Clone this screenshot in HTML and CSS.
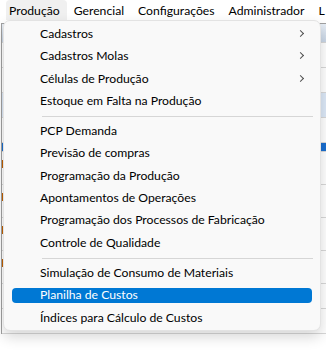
FILE: index.html
```html
<!DOCTYPE html>
<html lang="pt-BR">
<head>
    <meta charset="UTF-8">
    <title>Produção</title>
    <link rel="stylesheet" href="styles.css">
</head>
<body>
    <nav class="menubar">
        <span class="top-item active">Produção</span>
        <span class="top-item">Gerencial</span>
        <span class="top-item">Configurações</span>
        <span class="top-item">Administrador</span>
        <span class="top-item">L</span>
    </nav>

    <div class="app">
        <div class="grid-row head"></div>
        <div class="grid-row"></div>
        <div class="grid-row"></div>
        <div class="grid-row light"></div>
        <div class="grid-row"></div>
        <div class="grid-row sel"></div>
        <div class="grid-row"><span class="mark"></span></div>
        <div class="grid-row"><span class="mark"></span></div>
        <div class="grid-row"><span class="mark"></span></div>
        <div class="grid-row"><span class="mark"></span></div>
        <div class="grid-row"></div>
        <div class="grid-row"></div>
    </div>

    <ul class="dropdown">
        <li class="item sub">Cadastros</li>
        <li class="item sub">Cadastros Molas</li>
        <li class="item sub">Células de Produção</li>
        <li class="item">Estoque em Falta na Produção</li>
        <li class="sep"></li>
        <li class="item">PCP Demanda</li>
        <li class="item">Previsão de compras</li>
        <li class="item">Programação da Produção</li>
        <li class="item">Apontamentos de Operações</li>
        <li class="item">Programação dos Processos de Fabricação</li>
        <li class="item">Controle de Qualidade</li>
        <li class="sep"></li>
        <li class="item">Simulação de Consumo de Materiais</li>
        <li class="item hover">Planilha de Custos</li>
        <li class="item">Índices para Cálculo de Custos</li>
    </ul>
</body>
</html>
```

FILE: styles.css
```css
body {
    margin: 0;
    font-family: Lato, "Noto Sans", sans-serif;
    font-size: 12.2px;
    color: #000;
    background: #fff;
    width: 326px;
    height: 352px;
    overflow: hidden;
    position: relative;
}

.menubar {
    display: flex;
    height: 20px;
    padding-left: 2px;
    white-space: nowrap;
    background: #fff;
}

.top-item {
    line-height: 20px;
    padding: 1px 7px 0;
}

.top-item.active {
    background: #f0f0f0;
    border-radius: 4px 4px 0 0;
    margin-left: 4px;
    padding-left: 3px;
}

.app {
    margin-left: 1px;
    border-left: 1px solid #a0a0a0;
}

.grid-row {
    height: 24px;
    border-bottom: 1px solid #d8d8d8;
    position: relative;
}

.grid-row.head {
    height: 18px;
    margin-top: 3px;
    background: linear-gradient(#e6edf5, #c9d6e6);
    border-top: 1px solid #a0a0a0;
}

.grid-row.light {
    background: #dce8f7;
}

.grid-row.sel {
    height: 8px;
    background: #1a6fd0;
}

.mark {
    display: block;
    width: 1px;
    height: 8px;
    margin-top: 8px;
    background: #c06000;
}

.dropdown {
    position: absolute;
    left: 3px;
    top: 20px;
    width: 316px;
    margin: 0;
    padding: 2px 0 1px;
    list-style: none;
    background: #f9f9f9;
    border: 1px solid #e3e3e3;
    border-radius: 7px;
    box-shadow: 0 6px 14px rgba(0, 0, 0, 0.16);
}

.item {
    position: relative;
    z-index: 0;
    height: 22.3px;
    line-height: 22px;
    padding-left: 36px;
    white-space: nowrap;
}

.item.sub::after {
    content: "";
    position: absolute;
    right: 17px;
    top: 8px;
    width: 4px;
    height: 4px;
    border-top: 1px solid #505050;
    border-right: 1px solid #505050;
    transform: rotate(45deg);
}

.item.hover {
    color: #fff;
}

.item.hover::before {
    content: "";
    position: absolute;
    left: 8px;
    right: 8px;
    top: 4px;
    bottom: 4px;
    background: #0078d4;
    border-radius: 4px;
    z-index: -1;
}

.sep {
    height: 1px;
    margin: 4px 7px 3px 38px;
    background: #d6d6d6;
}
```
